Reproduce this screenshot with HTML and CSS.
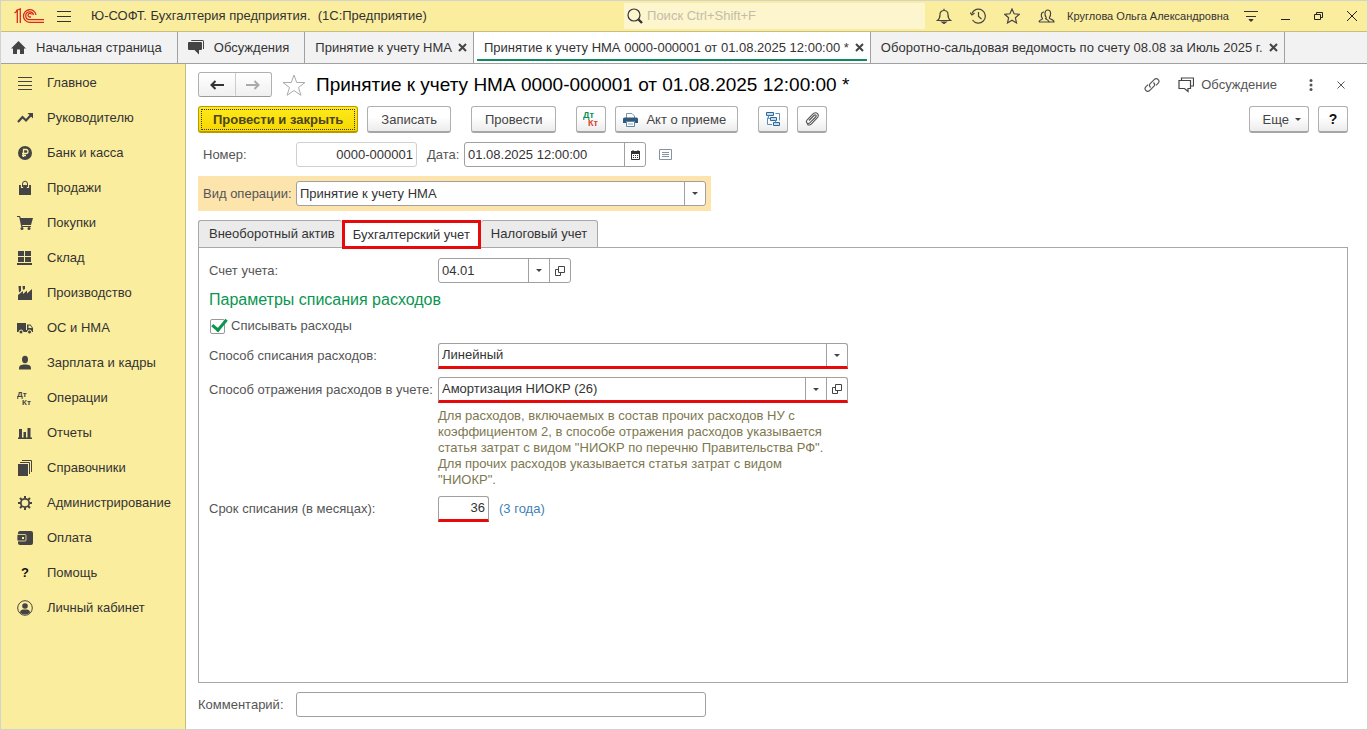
FILE: index.html
```html
<!DOCTYPE html>
<html lang="ru">
<head>
  <meta charset="UTF-8" />
  <meta name="viewport" content="width=device-width, initial-scale=1.0"/>
  <title>Принятие к учету НМА</title>
  <link rel="stylesheet" href="styles.css">
</head>
<body>
<div class="window">

  <header class="titlebar">
    <svg class="logo" width="30" height="16" viewBox="0 0 30 16" fill="none" stroke="#d9291c" stroke-width="1.3">
      <path d="M.5 5L3.300 3V15M2 2.500L6.300 1V15"/>
      <path d="M22 7A6.300 6.300 0 1 0 15.500 14.300H30"/>
      <path d="M19.500 7A3.900 3.900 0 1 0 15.500 11.700H30"/>
      <path d="M17.500 6.500A1.800 1.800 0 1 0 15.500 9H17"/>
    </svg>
    <button class="icon-btn burger" aria-label="Меню">
      <svg width="14" height="13" viewBox="0 0 14 13" stroke="#333"><path d="M0 1.500h14M0 6.500h14M0 11.500h14"/></svg>
    </button>
    <div class="app-name">Ю-СОФТ. Бухгалтерия предприятия.&nbsp; (1С:Предприятие)</div>
    <div class="search">
      <svg width="16" height="16" viewBox="0 0 16 16" fill="none" stroke="#333"><circle cx="7" cy="7" r="6" stroke-width="1.2"/><path d="M11.500 11.500l3.500 3.500" stroke-width="2.400"/></svg>
      <input type="text" placeholder="Поиск Ctrl+Shift+F" aria-label="Поиск" />
    </div>
    <div class="top-icons">
      <button class="icon-btn" aria-label="Уведомления">
        <svg width="16" height="16" viewBox="0 0 16 16" fill="none" stroke="#444" stroke-width="1.2"><path d="M1.500 12.500c2-1.500 2.500-3 2.500-6 0-2.500 1.500-4 4-4s4 1.500 4 4c0 3 .5 4.500 2.500 6zM8 2.500V.8"/><path d="M6 14h4l-2 1.500z" fill="#444"/></svg>
      </button>
      <button class="icon-btn" aria-label="История">
        <svg width="16" height="16" viewBox="0 0 16 16" fill="none" stroke="#444" stroke-width="1.200"><path d="M1.800 5.500A7 7 0 1 1 2.500 12M8.500 4v4.500l3 2.500"/><path d="M0 4.500l2 2.500 2.500-2"/></svg>
      </button>
      <button class="icon-btn" aria-label="Избранное">
        <svg width="16" height="16" viewBox="0 0 16 16" fill="none" stroke="#444" stroke-width="1.200"><path d="M8 1l2.100 4.800 5.200.5-3.900 3.500 1.100 5.100L8 12.200l-4.500 2.700 1.100-5.100L.7 6.300l5.200-.5z"/></svg>
      </button>
      <button class="icon-btn" aria-label="Пользователи">
        <svg width="17" height="16" viewBox="0 0 17 16" fill="none" stroke="#444" stroke-width="1.200"><path d="M7 11c1.500-.5 1.500-1 1-1.800C6.800 7.500 6 2 9.800 2s3 5.500 1.800 7.200c-.5.800-.4 1.300 1 1.800 2.200.7 3.400 1 3.400 3H11"/><path d="M1 14c0-2.500 3.500-2 3.500-3.500C2.500 8 3 4 6 4M1 14h10c0-1.500-1-2-3-3"/></svg>
      </button>
    </div>
    <div class="user">Круглова Ольга Александровна</div>
    <div class="win-icons">
      <button class="icon-btn" aria-label="Настройки">
        <svg width="14" height="14" viewBox="0 0 14 14" stroke="#333"><path d="M0 2.500h14M2 7.500h10"/><path d="M5 10.500h4l-2 2z" fill="#333"/></svg>
      </button>
      <button class="icon-btn" aria-label="Свернуть">
        <svg width="10" height="10" viewBox="0 0 10 10" stroke="#222"><path d="M0 8.500h9"/></svg>
      </button>
      <button class="icon-btn" aria-label="Восстановить">
        <svg width="10" height="10" viewBox="0 0 10 10" fill="none" stroke="#222"><path d="M.5 3.500h6v5h-6zM2.500 3.500v-2h6v5h-2"/></svg>
      </button>
      <button class="icon-btn" aria-label="Закрыть">
        <svg width="10" height="10" viewBox="0 0 10 10" stroke="#222"><path d="M0 0l10 10M10 0L0 10"/></svg>
      </button>
    </div>
  </header>

  <nav class="pages">
    <a class="page page-home" href="#">
      <svg width="15" height="14" viewBox="0 0 15 14" fill="#444"><path d="M7.500 0L0 7.500h2V13h4V8.500h3V13h4V7.500h2z"/></svg>
      Начальная страница</a>
    <a class="page page-home" href="#">
      <svg width="16" height="15" viewBox="0 0 16 15" fill="#444"><path d="M4 0h10.500Q16 0 16 1.500V9h-1V1H3q0-1 1-1z"/><path d="M1 2h12q1 0 1 1v6q0 1-1 1h-2v4.500L6.500 10H1Q0 10 0 9V3q0-1 1-1z"/></svg>
      Обсуждения</a>
    <a class="page" href="#">Принятие к учету НМА
      <svg class="cross" viewBox="0 0 9 9"><path d="M1 1l7 7M8 1L1 8"/></svg></a>
    <a class="page page-active" href="#">Принятие к учету НМА 0000-000001 от 01.08.2025 12:00:00 *
      <svg class="cross" viewBox="0 0 9 9"><path d="M1 1l7 7M8 1L1 8"/></svg></a>
    <a class="page" href="#">Оборотно-сальдовая ведомость по счету 08.08 за Июль 2025 г.
      <svg class="cross" viewBox="0 0 9 9"><path d="M1 1l7 7M8 1L1 8"/></svg></a>
  </nav>

  <div class="body">
    <nav class="sidebar">
      <a href="#"><svg viewBox="0 0 16 16" stroke="#444"><path d="M1 2.500h14M1 6.500h14M1 10.500h14M1 14.500h14"/></svg>Главное</a>
      <a href="#"><svg viewBox="0 0 16 16" fill="none" stroke="#444" stroke-width="2.200"><path d="M1 12l4.500-5 3.500 3.500 5-5.500"/><path d="M10.500 3H16v5.500z" fill="#444" stroke="none"/></svg>Руководителю</a>
      <a href="#"><svg viewBox="0 0 16 16"><circle cx="8" cy="8" r="7" fill="#444"/><path d="M6.500 12V4.500h2.500q2 0 2 2t-2 2H5M5 10.500h4" fill="none" stroke="#fbed9e" stroke-width="1.300"/></svg>Банк и касса</a>
      <a href="#"><svg viewBox="0 0 16 16"><path d="M2 5h12v10H2z" fill="#444"/><path d="M5 8V4q0-3 3-3t3 3v4" fill="none" stroke="#fbed9e" stroke-width="2.200"/><path d="M5.500 7V4q0-2.800 2.500-2.800T10.500 4v3" fill="none" stroke="#444"/></svg>Продажи</a>
      <a href="#"><svg viewBox="0 0 16 16" fill="#444"><path d="M0 1h3l.7 2H16l-2 7H5l.3 1H14v1H4.300L2.200 2H0z"/><circle cx="5" cy="13.500" r="1.500"/><circle cx="12" cy="13.500" r="1.500"/></svg>Покупки</a>
      <a href="#"><svg viewBox="0 0 16 16" fill="#444"><path d="M1 1h6v5H1zM8 1h6v5H8zM1 7h6v5H1zM8 7h6v5H8zM0 13h15v2H0z"/></svg>Склад</a>
      <a href="#"><svg viewBox="0 0 16 16" fill="#444"><path d="M1 15v-5l5-4v3l4-3.500v3L15 4v11zM1.500 1H4v5L2 7.500zM5.500 1H8v3L6 5z"/></svg>Производство</a>
      <a href="#"><svg viewBox="0 0 16 16" fill="#444"><path d="M0 3h9v9H0z"/><path d="M10 4.500h3.500L16 8v4h-6zm1.500 1V8H15l-1.800-2.500z" fill-rule="evenodd"/><path d="M8 10h3v2H8z"/><circle cx="4" cy="12" r="2" stroke="#fbed9e"/><circle cx="12.500" cy="12" r="2" stroke="#fbed9e"/></svg>ОС и НМА</a>
      <a href="#"><svg viewBox="0 0 16 16" fill="#444"><ellipse cx="8" cy="4.500" rx="3" ry="3.700"/><path d="M2 14.500c0-4 1-4.500 4.500-5h3c3.500.5 4.500 1 4.500 5z"/></svg>Зарплата и кадры</a>
      <a href="#"><svg class="dtkt" viewBox="0 0 16 16" fill="#444"><text x="0" y="7">Дт</text><text x="5" y="15">Кт</text></svg>Операции</a>
      <a href="#"><svg viewBox="0 0 16 16" fill="#444"><path d="M1 12.500h14V14H1zM2 4h3v9H2zM6.500 7h2.500v6H6.500zM10.500 3h3v10h-3z"/></svg>Отчеты</a>
      <a href="#"><svg viewBox="0 0 16 16"><path d="M1 4h10v12H1z" fill="#444"/><path d="M3 2.500h9.500V14M5 .5h9.500V12" fill="none" stroke="#444"/></svg>Справочники</a>
      <a href="#"><svg viewBox="0 0 16 16" fill="none" stroke="#444"><circle cx="8" cy="8" r="4.200" stroke-width="1.800"/><path d="M8 1v2.500M8 12.500V15M1 8h2.500M12.500 8H15M3 3l2 2M11 11l2 2M13 3l-2 2M5 11l-2 2" stroke-width="2"/></svg>Администрирование</a>
      <a href="#"><svg viewBox="0 0 16 16"><rect x="1" y="1" width="15" height="14" rx="2" fill="#444"/><rect x="0" y="4.500" width="9" height="6.500" rx="1" fill="#444" stroke="#fbed9e" stroke-width=".8"/><path d="M5 7h2v2H5z" fill="#fbed9e"/></svg>Оплата</a>
      <a href="#"><b class="q">?</b>Помощь</a>
      <a href="#"><svg viewBox="0 0 16 16" fill="#444"><circle cx="8" cy="8" r="7.300" fill="none" stroke="#444"/><circle cx="8" cy="6" r="2.800"/><path d="M3 12.500c0-2.500 2-3 5-3s5 .5 5 3c-2.500 2.500-7.500 2.500-10 0z"/></svg>Личный кабинет</a>
    </nav>

    <main class="content">
      <div class="head">
        <div class="history">
          <button aria-label="Назад"><svg width="14" height="10" viewBox="0 0 14 10" fill="none" stroke="#333" stroke-width="2"><path d="M14 5H2M5.500 1L1.500 5l4 4"/></svg></button>
          <button aria-label="Вперед"><svg width="14" height="10" viewBox="0 0 14 10" fill="none" stroke="#aaa" stroke-width="2"><path d="M0 5h12M8.500 1l4 4-4 4"/></svg></button>
        </div>
        <button class="icon-btn" aria-label="В избранное">
          <svg width="24" height="22" viewBox="0 0 24 22" fill="none" stroke="#aaa"><path d="M12 1l2.700 7.500H23l-6.500 5 2.400 7.800L12 16.500l-6.900 4.800 2.400-7.800L1 8.500h8.300z"/></svg>
        </button>
        <h1>Принятие к учету НМА 0000-000001 от 01.08.2025 12:00:00 *</h1>
        <div class="head-tools">
          <button class="icon-btn" aria-label="Ссылка">
            <svg width="16" height="16" viewBox="0 0 16 16" fill="none" stroke="#555" stroke-width="1.200"><path d="M6.500 10.500C5 9 5.200 7.600 6.200 6.600l4-4c1.200-1.200 2.800-1.200 4 0s1 2.600 0 3.600L12 8.400M9.500 5.500c1.500 1.500 1.300 2.900.3 3.900l-4 4c-1.200 1.200-2.800 1.200-4 0s-1-2.600 0-3.600L4 7.600"/></svg>
          </button>
          <button class="icon-btn talk">
            <svg width="16" height="16" viewBox="0 0 16 16" fill="none" stroke="#444" stroke-width="1.200"><path d="M3.500 3V1h12v8H13M1 3.500h11.500v8H10v3l-3.500-3H1z"/></svg>
            Обсуждение
          </button>
          <button class="icon-btn" aria-label="Еще">
            <svg width="4" height="14" viewBox="0 0 4 14" fill="#555"><circle cx="2" cy="2.500" r="1.500"/><circle cx="2" cy="7" r="1.500"/><circle cx="2" cy="11.500" r="1.500"/></svg>
          </button>
          <button class="icon-btn" aria-label="Закрыть">
            <svg width="8" height="8" viewBox="0 0 8 8" stroke="#555"><path d="M.5.5l7 7M7.500.5l-7 7"/></svg>
          </button>
        </div>
      </div>

      <div class="toolbar">
        <div class="group">
          <button class="btn btn-main">Провести и закрыть</button>
          <button class="btn">Записать</button>
        </div>
        <button class="btn">Провести</button>
        <div class="group">
          <button class="btn btn-icon" aria-label="Проводки">
            <svg class="dtkt dtkt-big" width="17" height="17" viewBox="0 0 17 17"><text x="0" y="7" fill="#0a8f55">Дт</text><text x="5" y="15" fill="#d9432f">Кт</text></svg>
          </button>
          <button class="btn btn-print">
            <svg width="15" height="14" viewBox="0 0 15 14"><path d="M3.500 5V.5h5.500L11.500 3v2" fill="#fff" stroke="#7d95a8"/><path d="M1.500 4.500h12Q15 4.500 15 6v4h-3V8.500H3V10H0V6q0-1.500 1.500-1.500z" fill="#30597c"/><path d="M3.500 8.500h8v5h-8z" fill="#fff" stroke="#5f88a8"/><path d="M5 11h5" stroke="#8aa9c0"/></svg>
            Акт о приеме
          </button>
        </div>
        <div class="group">
          <button class="btn btn-icon" aria-label="Структура подчиненности">
            <svg width="15" height="15" viewBox="0 0 15 15" fill="#c4dcef" stroke="#2f6796"><path d="M.5.5h7v3h-7zM4.500 5.500h6v3h-6zM7.500 10.500h6v3h-6z"/><path d="M9.500 1.500h4v7M1.500 5.500v7H6M2.500 3.500v3H4M9.500 8.500v2" fill="none" stroke="#5b8fba"/></svg>
          </button>
          <button class="btn btn-icon" aria-label="Файлы">
            <svg width="14" height="14" viewBox="0 0 14 14" fill="none" stroke="#555" stroke-width="1.100"><path d="M4 8.500l5-5c1.500-1.500 3 0 1.700 1.500L5 10.700C3 12.500 0 10.500 2 8l5.500-5.700C9.500.2 11.500.5 12.500 1.600s1 3-.6 4.600L6.500 11.800c-1.500 1.500-3 1.500-4.300.5"/></svg>
          </button>
        </div>
        <div class="group group-right">
          <button class="btn btn-more">Еще <i class="caret"></i></button>
          <button class="btn btn-icon"><b>?</b></button>
        </div>
      </div>

      <div class="row row-number">
        <label class="lbl" for="number">Номер:</label>
        <div class="field field-number"><input id="number" type="text" value="0000-000001" /></div>
        <label class="lbl-date" for="date">Дата:</label>
        <div class="field field-date">
          <input id="date" type="text" value="01.08.2025 12:00:00" />
          <button aria-label="Календарь"><svg width="9" height="10" viewBox="0 0 9 10"><path d="M.5 1.500h8v8h-8z" fill="#fff" stroke="#333"/><path d="M0 1h9v3H0z" fill="#333"/><path d="M2 0v2M7 0v2" stroke="#333"/><path d="M2 5.500h5M2 7.500h5" stroke="#333" stroke-dasharray="1 1"/></svg></button>
        </div>
        <button class="icon-btn list-btn" aria-label="Список">
          <svg width="13" height="11" viewBox="0 0 13 11" fill="none" stroke="#8493a0"><path d="M.5.5h12v10H.5zM3 3.500h7M3 5.500h7M3 7.500h7"/></svg>
        </button>
      </div>

      <div class="row row-kind">
        <label class="lbl" for="kind">Вид операции:</label>
        <div class="field field-grow">
          <select id="kind"><option>Принятие к учету НМА</option></select>
          <button aria-label="Выбрать"><i class="caret"></i></button>
        </div>
      </div>

      <div class="tabs">
        <button class="tab">Внеоборотный актив</button>
        <button class="tab tab-active">Бухгалтерский учет</button>
        <button class="tab">Налоговый учет</button>
      </div>

      <section class="panel">
        <div class="line">
          <label for="account">Счет учета:</label>
          <div class="field field-account">
            <input id="account" type="text" value="04.01" />
            <button aria-label="Выбрать"><i class="caret"></i></button>
            <button aria-label="Открыть"><svg class="open" viewBox="0 0 10 10"><path d="M3.500.5h6v6h-6zM3.500 3.500h-3v6h5v-3"/></svg></button>
          </div>
        </div>
        <h2>Параметры списания расходов</h2>
        <label class="check"><input type="checkbox" checked /><span>Списывать расходы</span></label>
        <div class="line">
          <label for="method">Способ списания расходов:</label>
          <div class="field field-wide marked">
            <select id="method"><option>Линейный</option></select>
            <button aria-label="Выбрать"><i class="caret"></i></button>
          </div>
        </div>
        <div class="line">
          <label for="reflect">Способ отражения расходов в учете:</label>
          <div class="field field-wide marked">
            <input id="reflect" type="text" value="Амортизация НИОКР (26)" />
            <button aria-label="Выбрать"><i class="caret"></i></button>
            <button aria-label="Открыть"><svg class="open" viewBox="0 0 10 10"><path d="M3.500.5h6v6h-6zM3.500 3.500h-3v6h5v-3"/></svg></button>
          </div>
        </div>
        <p class="hint">Для расходов, включаемых в состав прочих расходов НУ с коэффициентом 2, в способе отражения расходов указывается статья затрат с видом "НИОКР по перечню Правительства РФ". Для прочих расходов указывается статья затрат с видом "НИОКР".</p>
        <div class="line">
          <label for="term">Срок списания (в месяцах):</label>
          <div class="field field-term marked"><input id="term" type="text" value="36" /></div>
          <span class="years">(3 года)</span>
        </div>
      </section>

      <div class="row row-comment">
        <label class="lbl" for="comment">Комментарий:</label>
        <div class="field field-comment"><input id="comment" type="text" /></div>
      </div>
    </main>
  </div>

</div>
</body>
</html>
```

FILE: styles.css
```css
* {
  box-sizing: border-box;
}

body {
  margin: 0;
  font-family: "Liberation Sans", Arial, sans-serif;
  font-size: 13px;
  line-height: 16px;
  color: #333;
  background: #fff;
}

button,
input,
select {
  font: inherit;
  color: inherit;
  margin: 0;
}

a {
  color: inherit;
  text-decoration: none;
}

svg {
  display: block;
  flex: none;
}

.window {
  display: flex;
  flex-direction: column;
  min-height: 100vh;
  border: 1px solid #d3d3cd;
}

.icon-btn {
  display: flex;
  align-items: center;
  padding: 0;
  border: none;
  background: none;
  cursor: pointer;
}

/* верхняя строка */
.titlebar {
  display: flex;
  align-items: center;
  height: 31px;
  padding: 0 10px 0 13px;
  background: #fbed9e;
  border-bottom: 1px solid #c9bd7c;
}

.burger {
  margin: 0 20px 0 13px;
}

.app-name {
  flex: 1;
  white-space: nowrap;
}

.search {
  display: flex;
  align-items: center;
  gap: 4px;
  width: 301px;
  height: 26px;
  padding-left: 3px;
  background: #fdf5cd;
}

.search input {
  flex: 1;
  min-width: 0;
  padding: 0;
  border: none;
  background: none;
}

.search input::placeholder {
  color: #c3bda6;
}

.top-icons {
  display: flex;
  gap: 18px;
  margin: 0 12px 0 11px;
}

.user {
  font-size: 11px;
  white-space: nowrap;
}

.win-icons {
  display: flex;
  align-items: center;
  gap: 23px;
  margin-left: 15px;
}

/* открытые страницы */
.pages {
  display: flex;
  height: 32px;
  background: #f2f2f2;
  border-bottom: 1px solid #a0a0a0;
}

.page {
  display: flex;
  align-items: center;
  gap: 6px;
  padding: 0 6px 0 10px;
  border-right: 1px solid #a0a0a0;
  white-space: nowrap;
}

.page-home {
  gap: 10px;
  padding-right: 15px;
}

.page-active {
  background: linear-gradient(#0f8a5f, #0f8a5f) center bottom 2px / calc(100% - 6px) 2px no-repeat #fff;
}

.cross {
  width: 9px;
  height: 9px;
  stroke: #444;
  stroke-width: 2;
}

.body {
  display: flex;
  flex: 1;
}

/* разделы */
.sidebar {
  flex: none;
  width: 185px;
  padding-top: 1px;
  background: #fbed9e;
  border-right: 1px solid #c9bd7c;
}

.sidebar a {
  display: flex;
  align-items: center;
  gap: 14px;
  height: 35px;
  padding-left: 16px;
}

.sidebar svg,
.sidebar .q {
  width: 16px;
  height: 16px;
}

.sidebar .q {
  text-align: center;
  color: #111;
}

.dtkt {
  font-size: 8px;
  font-weight: bold;
}

.dtkt-big {
  font-size: 9px;
}

/* форма документа */
.content {
  display: flex;
  flex: 1;
  flex-direction: column;
  min-width: 0;
  padding: 8px 19px 12px 12px;
}

.head {
  display: flex;
  align-items: center;
  height: 25px;
}

.history {
  display: flex;
  width: 74px;
  height: 25px;
  margin-right: 10px;
  border: 1px solid #b0b0b0;
  border-bottom-color: #999;
  border-radius: 3px;
}

.history button {
  display: flex;
  flex: 1;
  align-items: center;
  justify-content: center;
  padding: 0;
  border: none;
  background: linear-gradient(#fff, #f0f0f0);
  border-radius: 3px;
}

.history button + button {
  border-left: 1px solid #ccc;
  border-radius: 0 3px 3px 0;
}

h1 {
  flex: 1;
  margin: 0 0 0 10px;
  font-size: 19px;
  line-height: 24px;
  font-weight: normal;
  color: #000;
  white-space: nowrap;
}

.head-tools {
  display: flex;
  align-items: center;
  padding-right: 3px;
  color: #555;
}

.talk {
  gap: 7px;
  margin: 0 32px 0 18px;
}

.talk + .icon-btn {
  margin-right: 24px;
}

.toolbar {
  display: flex;
  gap: 20px;
  margin-top: 9px;
}

.group {
  display: flex;
  gap: 9px;
}

.group-right {
  margin-left: auto;
}

.btn {
  display: flex;
  align-items: center;
  justify-content: center;
  height: 27px;
  padding: 1px 13px 0;
  border: 1px solid #b0b0b0;
  border-bottom: 2px solid #a6a6a6;
  border-radius: 3px;
  background: linear-gradient(#fff 40%, #ececec);
  color: #444;
  white-space: nowrap;
}

.btn-main {
  padding: 1px 14px 0;
  border-color: #b59a00;
  background: linear-gradient(#ffea1c, #f7d800);
  color: #4a4420;
  font-weight: bold;
  outline: 1px dotted #333;
  outline-offset: -4px;
}

.btn-icon {
  width: 30px;
  padding: 0;
}

.btn-icon b {
  font-size: 14px;
  color: #111;
}

.btn-print {
  gap: 8px;
  padding: 1px 11px 0 7px;
}

.btn-more {
  gap: 6px;
  padding: 1px 7px 0 13px;
}

.caret {
  border: 3px solid transparent;
  border-top-color: #444;
  border-bottom: none;
}

.row {
  display: flex;
  align-items: center;
}

.lbl {
  width: 93px;
  color: #555;
}

.field {
  display: flex;
  height: 25px;
  border: 1px solid #a0a0a0;
  border-radius: 3px;
  background: #fff;
}

.field input,
.field select {
  flex: 1;
  width: 0;
  min-width: 0;
  padding: 0 3px;
  border: none;
  background: none;
  appearance: none;
}

.field button {
  display: flex;
  align-items: center;
  justify-content: center;
  width: 21px;
  padding: 0;
  border: none;
  border-left: 1px solid #a0a0a0;
  background: none;
}

.open {
  width: 10px;
  height: 10px;
  fill: none;
  stroke: #444;
}

.row-number {
  margin-top: 9px;
  padding-left: 5px;
}

.field-number {
  width: 121px;
  border-color: #d0d0d0;
}

.field-number input,
.field-term input {
  text-align: right;
}

.lbl-date {
  width: 37px;
  margin-left: 10px;
  color: #555;
}

.field-date {
  width: 182px;
}

.list-btn {
  margin-left: 13px;
}

.row-kind {
  width: 513px;
  margin-top: 9px;
  padding: 5px;
  background: #fce4ac;
}

.field-grow {
  flex: 1;
}

/* вкладки */
.tabs {
  display: flex;
  height: 28px;
  margin-top: 9px;
}

.tab {
  padding: 0 10px;
  border: 1px solid #a8a8a8;
  border-radius: 3px 3px 0 0;
  background: #ebebeb;
  white-space: nowrap;
}

.tab:first-child {
  padding-right: 7px;
  border-right: none;
}

.tab:last-child {
  border-left: none;
}

.tab-active {
  z-index: 1;
  height: 29px;
  padding: 0 8px;
  border: 3px solid #e60a0a;
  border-radius: 0;
  background: #fff;
}

.panel {
  flex: 1;
  margin-top: -1px;
  padding: 10px;
  border: 1px solid #a8a8a8;
}

.line {
  display: flex;
  align-items: center;
}

.line label {
  width: 229px;
  color: #555;
  white-space: nowrap;
}

h2 {
  margin: 7px 0 8px;
  font-size: 16px;
  line-height: 20px;
  font-weight: normal;
  color: #0a9650;
}

.check {
  display: flex;
  align-items: center;
  gap: 6px;
  margin-bottom: 9px;
  color: #555;
}

.check input {
  width: 15px;
  height: 15px;
  margin: 0 0 0 1px;
  border: 1px solid #999;
  border-radius: 2px;
  appearance: none;
}

.check input:checked::before {
  content: "";
  display: block;
  width: 6px;
  height: 12px;
  margin: -4px 0 0 4px;
  border: solid #0a9650;
  border-width: 0 3px 3px 0;
  transform: rotate(40deg);
}

.field-account {
  width: 133px;
}

.field-wide {
  width: 410px;
}

/* красное подчеркивание */
.marked {
  height: 26px;
  border-bottom: 3px solid #e60a0a;
  border-radius: 3px 3px 0 0;
}

.line + .line {
  margin-top: 8px;
}

.hint {
  width: 390px;
  margin: 5px 0 8px 229px;
  color: #7d7850;
}

.field-term {
  width: 51px;
}

.years {
  margin-left: 10px;
  color: #3f7fb5;
}

.row-comment {
  margin-top: 9px;
}

.row-comment .lbl {
  width: 98px;
}

.field-comment {
  width: 410px;
}
```
